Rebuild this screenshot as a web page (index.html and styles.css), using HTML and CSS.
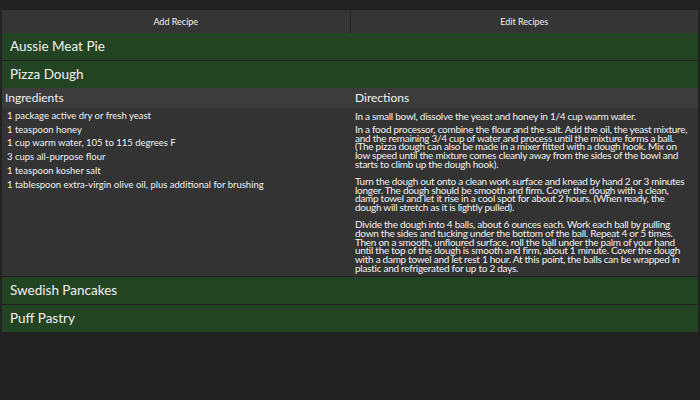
FILE: index.html
```html
<!DOCTYPE html>
<html>
<head>
<meta charset="utf-8">
<link rel="stylesheet" href="styles.css">
</head>
<body>
<div class="app">
  <nav class="nav">
    <button class="nav-btn">Add Recipe</button>
    <button class="nav-btn">Edit Recipes</button>
  </nav>
  <div class="recipe">
    <div class="recipe-title">Aussie Meat Pie</div>
  </div>
  <div class="recipe">
    <div class="recipe-title">Pizza Dough</div>
    <div class="details">
      <div class="col-head">Ingredients</div>
      <div class="col-head">Directions</div>
      <ul class="ingredients">
        <li>1 package active dry or fresh yeast</li>
        <li>1 teaspoon honey</li>
        <li>1 cup warm water, 105 to 115 degrees F</li>
        <li>3 cups all-purpose flour</li>
        <li>1 teaspoon kosher salt</li>
        <li>1 tablespoon extra-virgin olive oil, plus additional for brushing</li>
      </ul>
      <div class="directions">
        <p>In a small bowl, dissolve the yeast and honey in 1/4 cup warm water.</p>
        <p>In a food processor, combine the flour and the salt. Add the oil, the yeast mixture, and the remaining 3/4 cup of water and process until the mixture forms a ball. (The pizza dough can also be made in a mixer fitted with a dough hook. Mix on low speed until the mixture comes cleanly away from the sides of the bowl and starts to climb up the dough hook).</p>
        <p>Turn the dough out onto a clean work surface and knead by hand 2 or 3 minutes longer. The dough should be smooth and firm. Cover the dough with a clean, damp towel and let it rise in a cool spot for about 2 hours. (When ready, the dough will stretch as it is lightly pulled).</p>
        <p>Divide the dough into 4 balls, about 6 ounces each. Work each ball by pulling down the sides and tucking under the bottom of the ball. Repeat 4 or 5 times. Then on a smooth, unfloured surface, roll the ball under the palm of your hand until the top of the dough is smooth and firm, about 1 minute. Cover the dough with a damp towel and let rest 1 hour. At this point, the balls can be wrapped in plastic and refrigerated for up to 2 days.</p>
      </div>
    </div>
  </div>
  <div class="recipe">
    <div class="recipe-title">Swedish Pancakes</div>
  </div>
  <div class="recipe">
    <div class="recipe-title">Puff Pastry</div>
  </div>
</div>
</body>
</html>
```
FILE: styles.css
```css
html, body {
  margin: 0;
  background: #222222;
  color: #f2f2f2;
  font-family: Lato, "Noto Sans", sans-serif;
}
.app {
  padding: 10px 2px;
}
.nav {
  display: grid;
  grid-template-columns: 1fr 1fr;
  gap: 1px;
}
.nav-btn {
  height: 23px;
  border: 0;
  background: #353535;
  color: #f0f0f0;
  font-family: Lato, sans-serif;
  font-size: 9px;
  padding: 0;
}
.recipe {
  margin-bottom: 1px;
}
.recipe-title {
  background: #234423;
  height: 27px;
  line-height: 27px;
  padding-left: 8px;
  font-size: 13.5px;
}
.details {
  display: grid;
  grid-template-columns: 350px 1fr;
  background: #333333;
}
.col-head {
  background: #3c3c3c;
  height: 20px;
  line-height: 20px;
  padding-left: 3px;
  font-size: 12px;
}
.ingredients {
  list-style: none;
  margin: 0;
  padding: 1px 5px 0 5px;
  font-size: 9.5px;
}
.ingredients li {
  line-height: 13.7px;
}
.directions {
  padding: 4px 6px 3px 3px;
  font-size: 10px;
  letter-spacing: -0.27px;
}
.directions p {
  margin: 0 0 8px 0;
  line-height: 8.8px;
}
.directions p:first-child {
  margin-bottom: 4px;
}
.directions p:last-child {
  margin-bottom: 0;
}
```
